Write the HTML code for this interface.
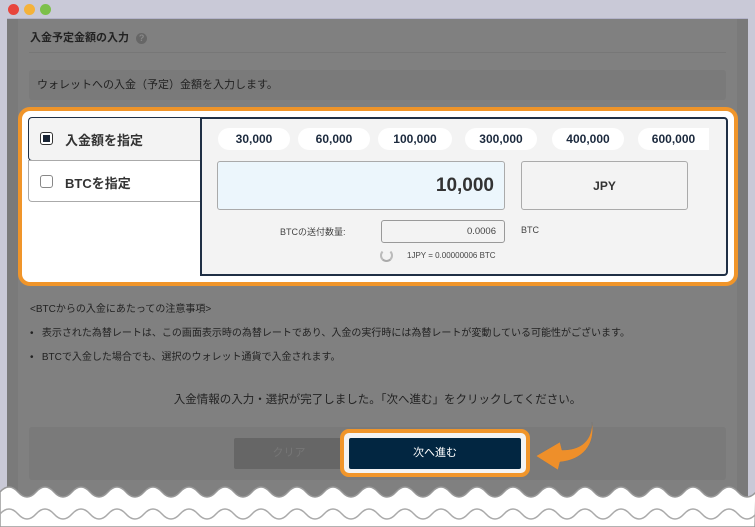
<!DOCTYPE html>
<html><head><meta charset="utf-8"><style>
*{margin:0;padding:0;box-sizing:border-box}
body{width:755px;height:527px;background:#c9c9d7;position:relative;overflow:hidden;font-family:"Liberation Sans","Noto Sans CJK JP",sans-serif;color:#222}
.abs{position:absolute}
.dot{position:absolute;top:4px;width:11px;height:11px;border-radius:50%}
.main{left:7px;top:18px;width:741px;height:509px;background:#808080;border-top:1px solid #b3b3c9}
.pill{position:absolute;top:128px;height:22px;width:72px;background:#fff;border-radius:11px;font-size:12px;font-weight:bold;color:#1c2a3e;text-align:center;line-height:22px}
</style></head><body>
<div class="dot" style="left:8px;background:#e8453c"></div>
<div class="dot" style="left:24px;background:#f4b23a"></div>
<div class="dot" style="left:40px;background:#7cc04a"></div>
<div class="abs main"></div>
<div class="abs" style="left:7px;top:19px;width:11px;height:480px;background:#7a7a7a"></div>
<div class="abs" style="left:737px;top:19px;width:11px;height:480px;background:#7a7a7a"></div>
<div class="abs" style="left:30px;top:29px;font-size:11px;font-weight:bold;color:#222">入金予定金額の入力 <span style="display:inline-block;width:11px;height:11px;border-radius:50%;background:#666;color:#888;font-size:9px;text-align:center;line-height:11px;margin-left:4px">?</span></div>
<div class="abs" style="left:29px;top:52px;width:697px;height:1px;background:#777"></div>
<div class="abs" style="left:29px;top:70px;width:697px;height:30px;background:#7a7a7a;border-radius:3px;font-size:11px;line-height:30px;padding-left:8px;color:#222">ウォレットへの入金（予定）金額を入力します。</div>
<div class="abs" style="left:18px;top:107px;width:720px;height:179px;border:4px solid #f0952a;border-radius:12px;background:#fff"></div>
<div class="abs" style="left:28px;top:117px;width:174px;height:44px;background:#f3f3f3;border:1.5px solid #1f2f45;border-right:none;border-radius:4px 0 0 4px"></div>
<div class="abs" style="left:40px;top:132px;width:13px;height:13px;border:1px solid #333;border-radius:3px;background:#fff"><div style="margin:2px;width:7px;height:7px;background:#1a2535"></div></div>
<div class="abs" style="left:65px;top:130px;font-size:13px;font-weight:bold;color:#333">入金額を指定</div>
<div class="abs" style="left:28px;top:160px;width:174px;height:42px;background:#fff;border:1px solid #aaa;border-right:none;border-radius:0 0 0 4px"></div>
<div class="abs" style="left:40px;top:175px;width:13px;height:13px;border:1px solid #888;border-radius:3px;background:#fff"></div>
<div class="abs" style="left:65px;top:173px;font-size:13px;font-weight:bold;color:#333">BTCを指定</div>
<div class="abs" style="left:200px;top:117px;width:528px;height:159px;background:#f3f3f3;border:2px solid #1f2f45;border-left-width:2px;border-radius:0 4px 4px 0"></div>
<div class="pill" style="left:218px">30,000</div>
<div class="pill" style="left:298px">60,000</div>
<div class="pill" style="left:378px;width:74px">100,000</div>
<div class="pill" style="left:465px">300,000</div>
<div class="pill" style="left:552px">400,000</div>
<div class="pill" style="left:638px;width:71px;border-radius:11px 0 0 11px">600,000</div>
<div class="abs" style="left:217px;top:161px;width:288px;height:49px;background:#ecf6fc;border:1px solid #aaa;border-radius:3px;font-size:19px;font-weight:bold;color:#333;text-align:right;padding-right:10px;line-height:48px">10,000</div>
<div class="abs" style="left:521px;top:161px;width:167px;height:49px;background:#f3f3f3;border:1px solid #aaa;border-radius:3px;font-size:12px;font-weight:bold;color:#333;text-align:center;line-height:48px">JPY</div>
<div class="abs" style="left:280px;top:225px;font-size:9px;color:#444">BTCの送付数量:</div>
<div class="abs" style="left:381px;top:220px;width:124px;height:23px;border:1px solid #999;border-radius:3px;font-size:9.5px;color:#444;text-align:right;padding-right:8px;line-height:22px">0.0006</div>
<div class="abs" style="left:521px;top:225px;font-size:9px;color:#444">BTC</div>
<div class="abs" style="left:380px;top:249px;width:13px;height:13px;border:2.5px solid #bbb;border-radius:50%;border-top-color:transparent;border-bottom-color:#aaa"></div>
<div class="abs" style="left:407px;top:251px;font-size:8px;color:#444">1JPY = 0.00000006 BTC</div>
<div class="abs" style="left:30px;top:300px;font-size:10px;color:#222">&lt;BTCからの入金にあたっての注意事項&gt;</div>
<div class="abs" style="left:30px;top:324px;font-size:10px;color:#222">•&nbsp;&nbsp;&nbsp;表示された為替レートは、この画面表示時の為替レートであり、入金の実行時には為替レートが変動している可能性がございます。</div>
<div class="abs" style="left:30px;top:348px;font-size:10px;color:#222">•&nbsp;&nbsp;&nbsp;BTCで入金した場合でも、選択のウォレット通貨で入金されます。</div>
<div class="abs" style="left:0;width:755px;top:391px;font-size:11.5px;color:#222;text-align:center">入金情報の入力・選択が完了しました。「次へ進む」をクリックしてください。</div>
<div class="abs" style="left:29px;top:427px;width:697px;height:53px;background:#7a7a7a;border-radius:3px"></div>
<div class="abs" style="left:234px;top:438px;width:110px;height:31px;background:#666;border-radius:2px;font-size:11px;color:#777;text-align:center;line-height:31px">クリア</div>
<div class="abs" style="left:340px;top:429px;width:190px;height:48px;background:#f3f3f3;border:4px solid #f0952a;border-radius:9px"></div>
<div class="abs" style="left:349px;top:438px;width:172px;height:31px;background:#022641;border-radius:2px;font-size:11px;color:#fff;text-align:center;line-height:31px">次へ進む</div>
<svg class="abs" style="left:530px;top:420px" width="70" height="55" viewBox="0 0 70 55"><path d="M62 2 C62 20 52 30 32 30 L30 22 L6 36 L28 50 L30 42 C52 40 66 25 62 2 Z" fill="#ee8f2a" stroke="#777" stroke-width="0.5"/></svg>
<svg class="abs" style="left:0;top:480px" width="755" height="47" viewBox="0 0 755 47"><path d="M0 12 Q9 2 18 12 T36 12 T54 12 T72 12 T90 12 T108 12 T126 12 T144 12 T162 12 T180 12 T198 12 T216 12 T234 12 T252 12 T270 12 T288 12 T306 12 T324 12 T342 12 T360 12 T378 12 T396 12 T414 12 T432 12 T450 12 T468 12 T486 12 T504 12 T522 12 T540 12 T558 12 T576 12 T594 12 T612 12 T630 12 T648 12 T666 12 T684 12 T702 12 T720 12 T738 12 T756 12 L755 47 L0 47 Z" fill="#fff" stroke="#999" stroke-width="1.5"/><path d="M0 34 Q9 24 18 34 T36 34 T54 34 T72 34 T90 34 T108 34 T126 34 T144 34 T162 34 T180 34 T198 34 T216 34 T234 34 T252 34 T270 34 T288 34 T306 34 T324 34 T342 34 T360 34 T378 34 T396 34 T414 34 T432 34 T450 34 T468 34 T486 34 T504 34 T522 34 T540 34 T558 34 T576 34 T594 34 T612 34 T630 34 T648 34 T666 34 T684 34 T702 34 T720 34 T738 34 T756 34" fill="none" stroke="#aaa" stroke-width="1.5"/></svg>
</body></html>
